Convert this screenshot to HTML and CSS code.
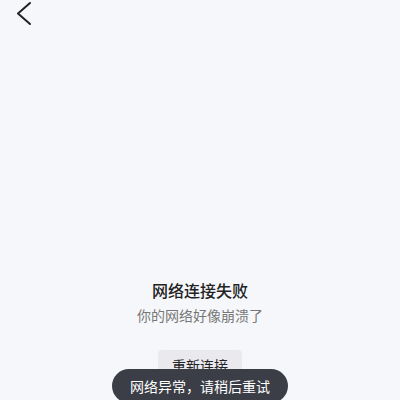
FILE: index.html
```html
<!DOCTYPE html>
<html lang="zh-CN">
<head>
<meta charset="utf-8">
<link rel="stylesheet" href="styles.css">
</head>
<body>
<div class="page">
  <div class="header">
    <svg class="back" width="18" height="26" viewBox="0 0 18 26">
      <path d="M14 2 L2 12.5 L14 23" fill="none" stroke="#222" stroke-width="2" stroke-linecap="round" stroke-linejoin="round"/>
    </svg>
  </div>
  <div class="main">
    <div class="title">网络连接失败</div>
    <div class="subtitle">你的网络好像崩溃了</div>
    <div class="retry">重新连接</div>
  </div>
</div>
<div class="toast">网络异常，请稍后重试</div>
</body>
</html>
```
FILE: styles.css
```css
html, body {
  margin: 0;
  padding: 0;
  background: #f6f7fb;
  font-family: "Noto Sans CJK SC", "Noto Sans", sans-serif;
}
.page {
  height: 400px;
  display: flex;
  flex-direction: column;
  overflow: hidden;
}
.header {
  height: 30px;
  padding-left: 16px;
  display: flex;
  align-items: flex-start;
  padding-top: 1px;
  box-sizing: border-box;
}
.back {
  display: block;
}
.main {
  padding-top: 249px;
  display: flex;
  flex-direction: column;
  align-items: center;
}
.title {
  font-size: 16px;
  line-height: 22px;
  color: #222;
  font-weight: 500;
}
.subtitle {
  margin-top: 4px;
  font-size: 14px;
  line-height: 20px;
  color: #777;
}
.retry {
  margin-top: 25px;
  width: 84px;
  height: 30px;
  line-height: 30px;
  text-align: center;
  font-size: 14px;
  color: #222;
  background: #e9e9ee;
  border-radius: 4px;
}
.toast {
  position: fixed;
  left: 112px;
  top: 369px;
  width: 176px;
  height: 34px;
  box-sizing: border-box;
  border-radius: 17px;
  background: #3b3e46;
  color: #fff;
  font-size: 14px;
  line-height: 34px;
  text-align: center;
}
```
